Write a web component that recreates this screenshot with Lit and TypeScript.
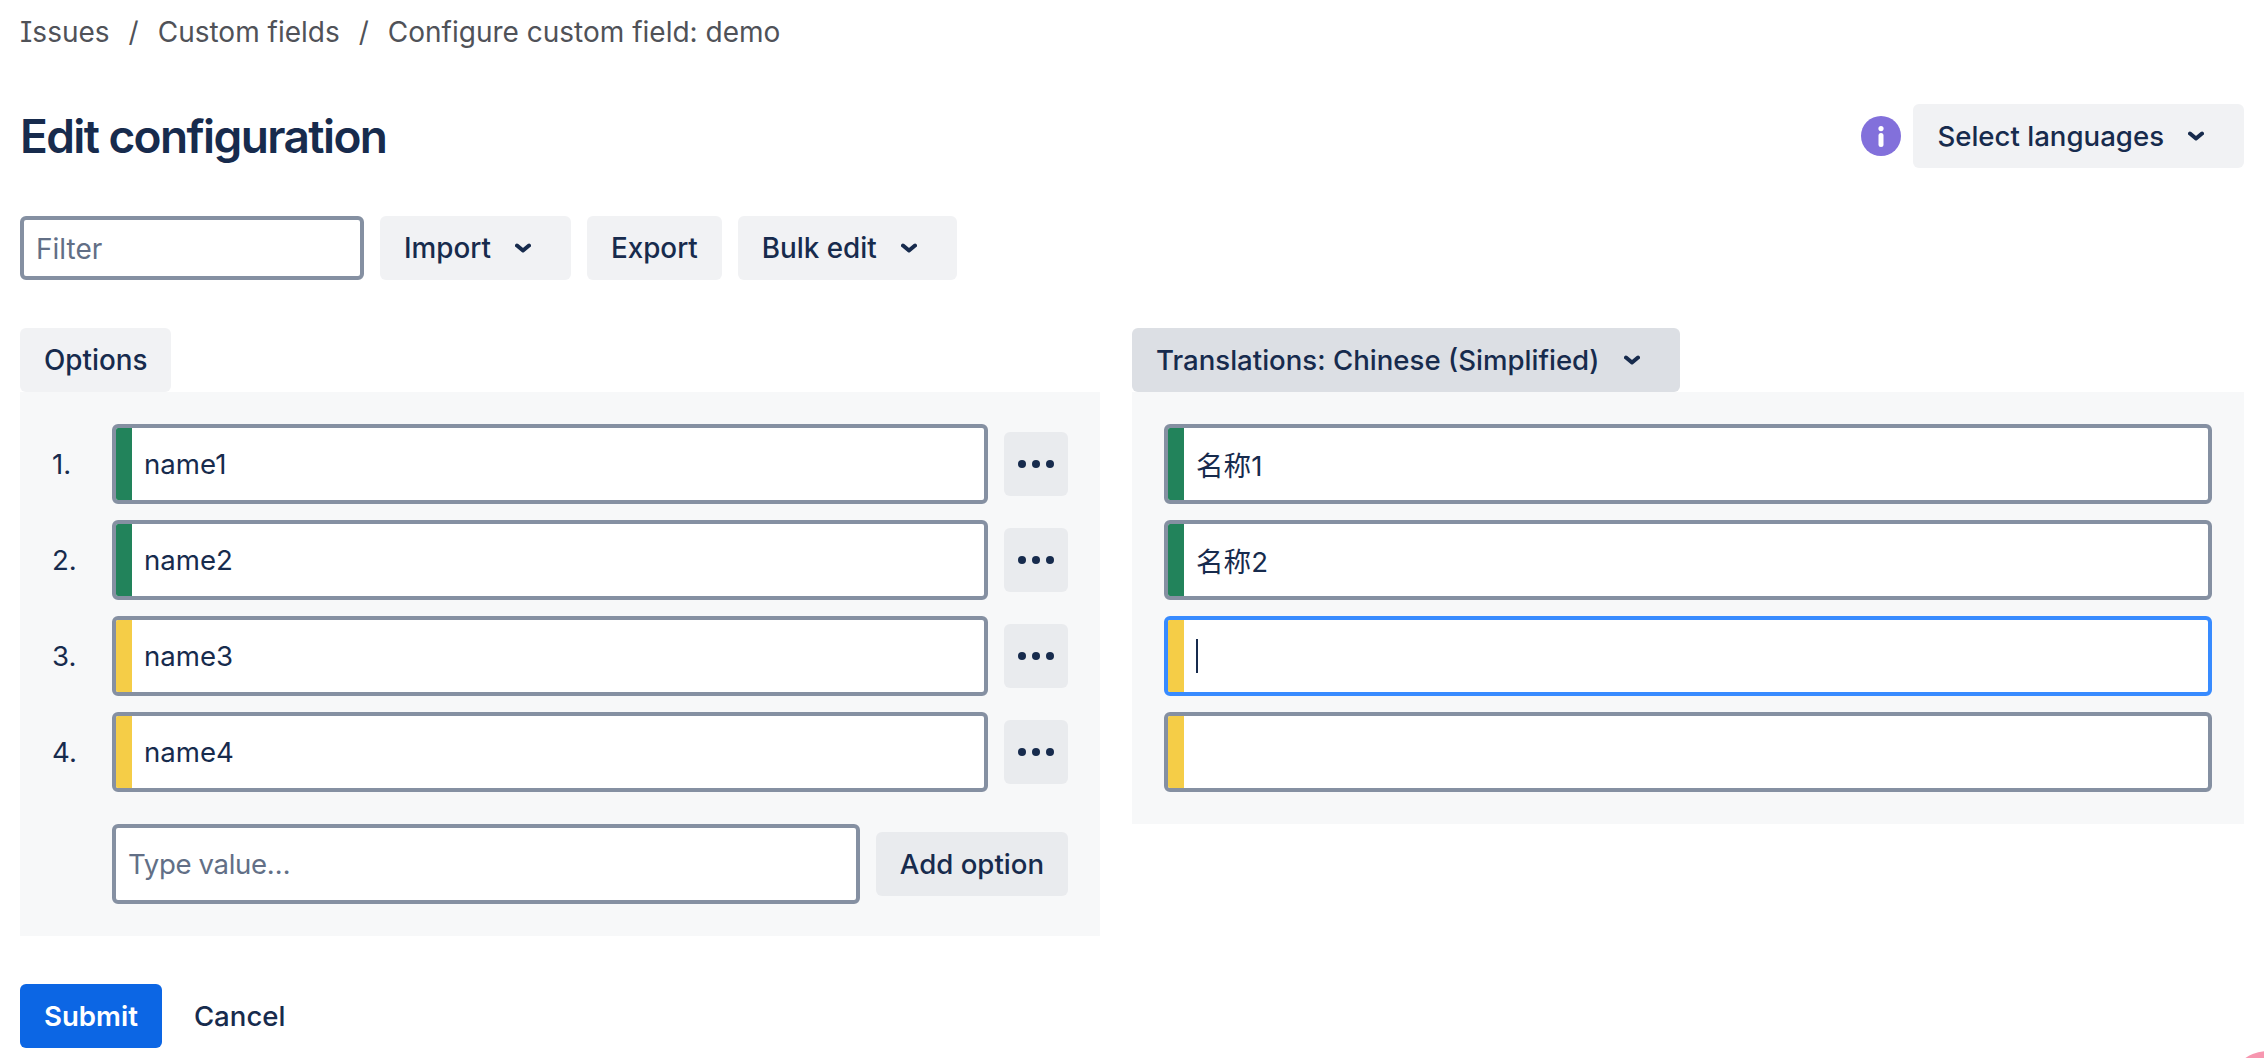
import { LitElement, html, css, svg } from "lit";
import { customElement } from "lit/decorators.js";

const chevron = html`<svg class="chev" viewBox="0 0 16 16" width="16" height="16"><path d="M2 5.5 8 10.5 14 5.5" fill="none" stroke="currentColor" stroke-width="4" stroke-linecap="round" stroke-linejoin="round"/></svg>`;
const dots = html`<svg viewBox="0 0 36 8" width="36" height="8">${[4, 18, 32].map((x) => svg`<circle cx=${x} cy="4" r="4" fill="currentColor"/>`)}</svg>`;

type Row = { name: string; tr: string; done: boolean; focus?: boolean };
const rows: Row[] = [
  { name: "name1", tr: "名称1", done: true },
  { name: "name2", tr: "名称2", done: true },
  { name: "name3", tr: "", done: false, focus: true },
  { name: "name4", tr: "", done: false },
];

@customElement("app-root")
export class AppRoot extends LitElement {
  static styles = css`
    :host { display: block; position: relative; height: 1058px; overflow: hidden; background: #fff; color: #172b4d;
      font-family: Inter, "Noto Sans CJK SC", sans-serif; font-size: 27.6px; }
    .crumbs { display: flex; box-sizing: border-box; height: 64px; align-items: flex-start; padding: 14px 20px 0; color: #505258; line-height: 36px; font-size: 28px; font-feature-settings: "cv08"; }
    .crumbs .sep { margin: 0 19px; }
    .page { padding: 0 20px; }
    .header { display: flex; align-items: center; justify-content: space-between; margin-top: 40px; height: 64px; }
    h1 { margin: 0; font-size: 46px; font-weight: 600; letter-spacing: -1.6px; line-height: 64px; }
    .lang { display: flex; align-items: center; gap: 12px; }
    .info { width: 40px; height: 40px; border-radius: 50%; background: #8270db; display: flex; align-items: center; justify-content: center; }
    .btn { display: inline-flex; align-items: center; height: 64px; padding: 0 24px; border-radius: 6px; background: #f1f2f4; font-weight: 500; white-space: nowrap; box-sizing: border-box; }
    .btn .chev { margin-left: 24px; margin-right: 16px; }
    .btn.soft { background: #e9ebee; }
    .btn.sel { background: #dcdfe4; }
    .btn.dots { width: 64px; padding: 0; justify-content: center; }
    .btn.primary { background: #0c66e4; color: #fff; font-weight: 600; }
    .btn.plain { background: none; }
    .tools { display: flex; gap: 16px; margin-top: 48px; }
    .tools .btn, .btn.opt { font-size: 27.8px; }
    .filter { width: 344px; height: 64px; box-sizing: border-box; border: 4px solid #8590a2; border-radius: 6px; padding: 1px 12px 0; display: flex; align-items: center; color: #626f86; background: #fff; font-size: 28px; }
    .cols { display: grid; grid-template-columns: 1080px 1fr; column-gap: 32px; margin-top: 48px; align-items: start; }
    .tab { vertical-align: top; }
    .panel { background: #f7f8f9; padding: 32px; display: flex; flex-direction: column; gap: 16px; }
    .row { display: flex; align-items: center; }
    .num { width: 60px; flex: none; }
    .field { flex: 1; height: 80px; box-sizing: border-box; border: 4px solid #8590a2; border-radius: 6px; background: #fff; display: flex; align-items: center; overflow: hidden; }
    .field.focus { border-color: #388bff; }
    .bar { width: 16px; align-self: stretch; flex: none; }
    .bar.done { background: #22835b; }
    .bar.todo { background: #f5cd47; }
    .val { padding-left: 12px; display: flex; align-items: center; }
    .caret { display: block; width: 2px; height: 34px; background: #172b4d; }
    .placeholder { padding-left: 12px; color: #626f86; letter-spacing: -0.35px; }
    .gap { margin-left: 16px; flex: none; }
    .addrow { margin-top: 16px; padding-left: 60px; }
    .actions { display: flex; gap: 8px; margin-top: 48px; }
    .blob { position: absolute; right: -44px; bottom: -73px; width: 80px; height: 80px; border-radius: 50%; background: #f797b0; box-shadow: 0 0 0 8px rgba(255,255,255,.9); }
  `;

  render() {
    return html`
      <nav class="crumbs"><span>Issues</span><span class="sep">/</span><span>Custom fields</span><span class="sep">/</span><span>Configure custom field: demo</span></nav>
      <main class="page">
        <header class="header">
          <h1>Edit configuration</h1>
          <div class="lang">
            <span class="info"><svg viewBox="0 0 6 21" width="6" height="21"><circle cx="3" cy="2.6" r="2.6" fill="#fff"/><rect x=".5" y="7" width="5" height="14" rx="2.5" fill="#fff"/></svg></span>
            <span class="btn">Select languages${chevron}</span>
          </div>
        </header>
        <div class="tools">
          <div class="filter">Filter</div>
          <span class="btn">Import${chevron}</span>
          <span class="btn">Export</span>
          <span class="btn">Bulk edit${chevron}</span>
        </div>
        <div class="cols">
          <section>
            <span class="btn tab opt">Options</span>
            <div class="panel">
              ${rows.map((r, i) => html`<div class="row">
                <span class="num">${i + 1}.</span>
                <div class="field"><span class="bar ${r.done ? "done" : "todo"}"></span><span class="val">${r.name}</span></div>
                <span class="btn soft dots gap">${dots}</span>
              </div>`)}
              <div class="row addrow">
                <div class="field"><span class="placeholder">Type value…</span></div>
                <span class="btn soft gap">Add option</span>
              </div>
            </div>
          </section>
          <section>
            <span class="btn sel tab">Translations: Chinese (Simplified)${chevron}</span>
            <div class="panel">
              ${rows.map((r) => html`<div class="row">
                <div class="field ${r.focus ? "focus" : ""}"><span class="bar ${r.done ? "done" : "todo"}"></span><span class="val">${r.tr}${r.focus ? html`<span class="caret"></span>` : ""}</span></div>
              </div>`)}
            </div>
          </section>
        </div>
        <div class="actions">
          <span class="btn primary">Submit</span>
          <span class="btn plain">Cancel</span>
        </div>
      </main>
      <div class="blob"></div>
    `;
  }
}
